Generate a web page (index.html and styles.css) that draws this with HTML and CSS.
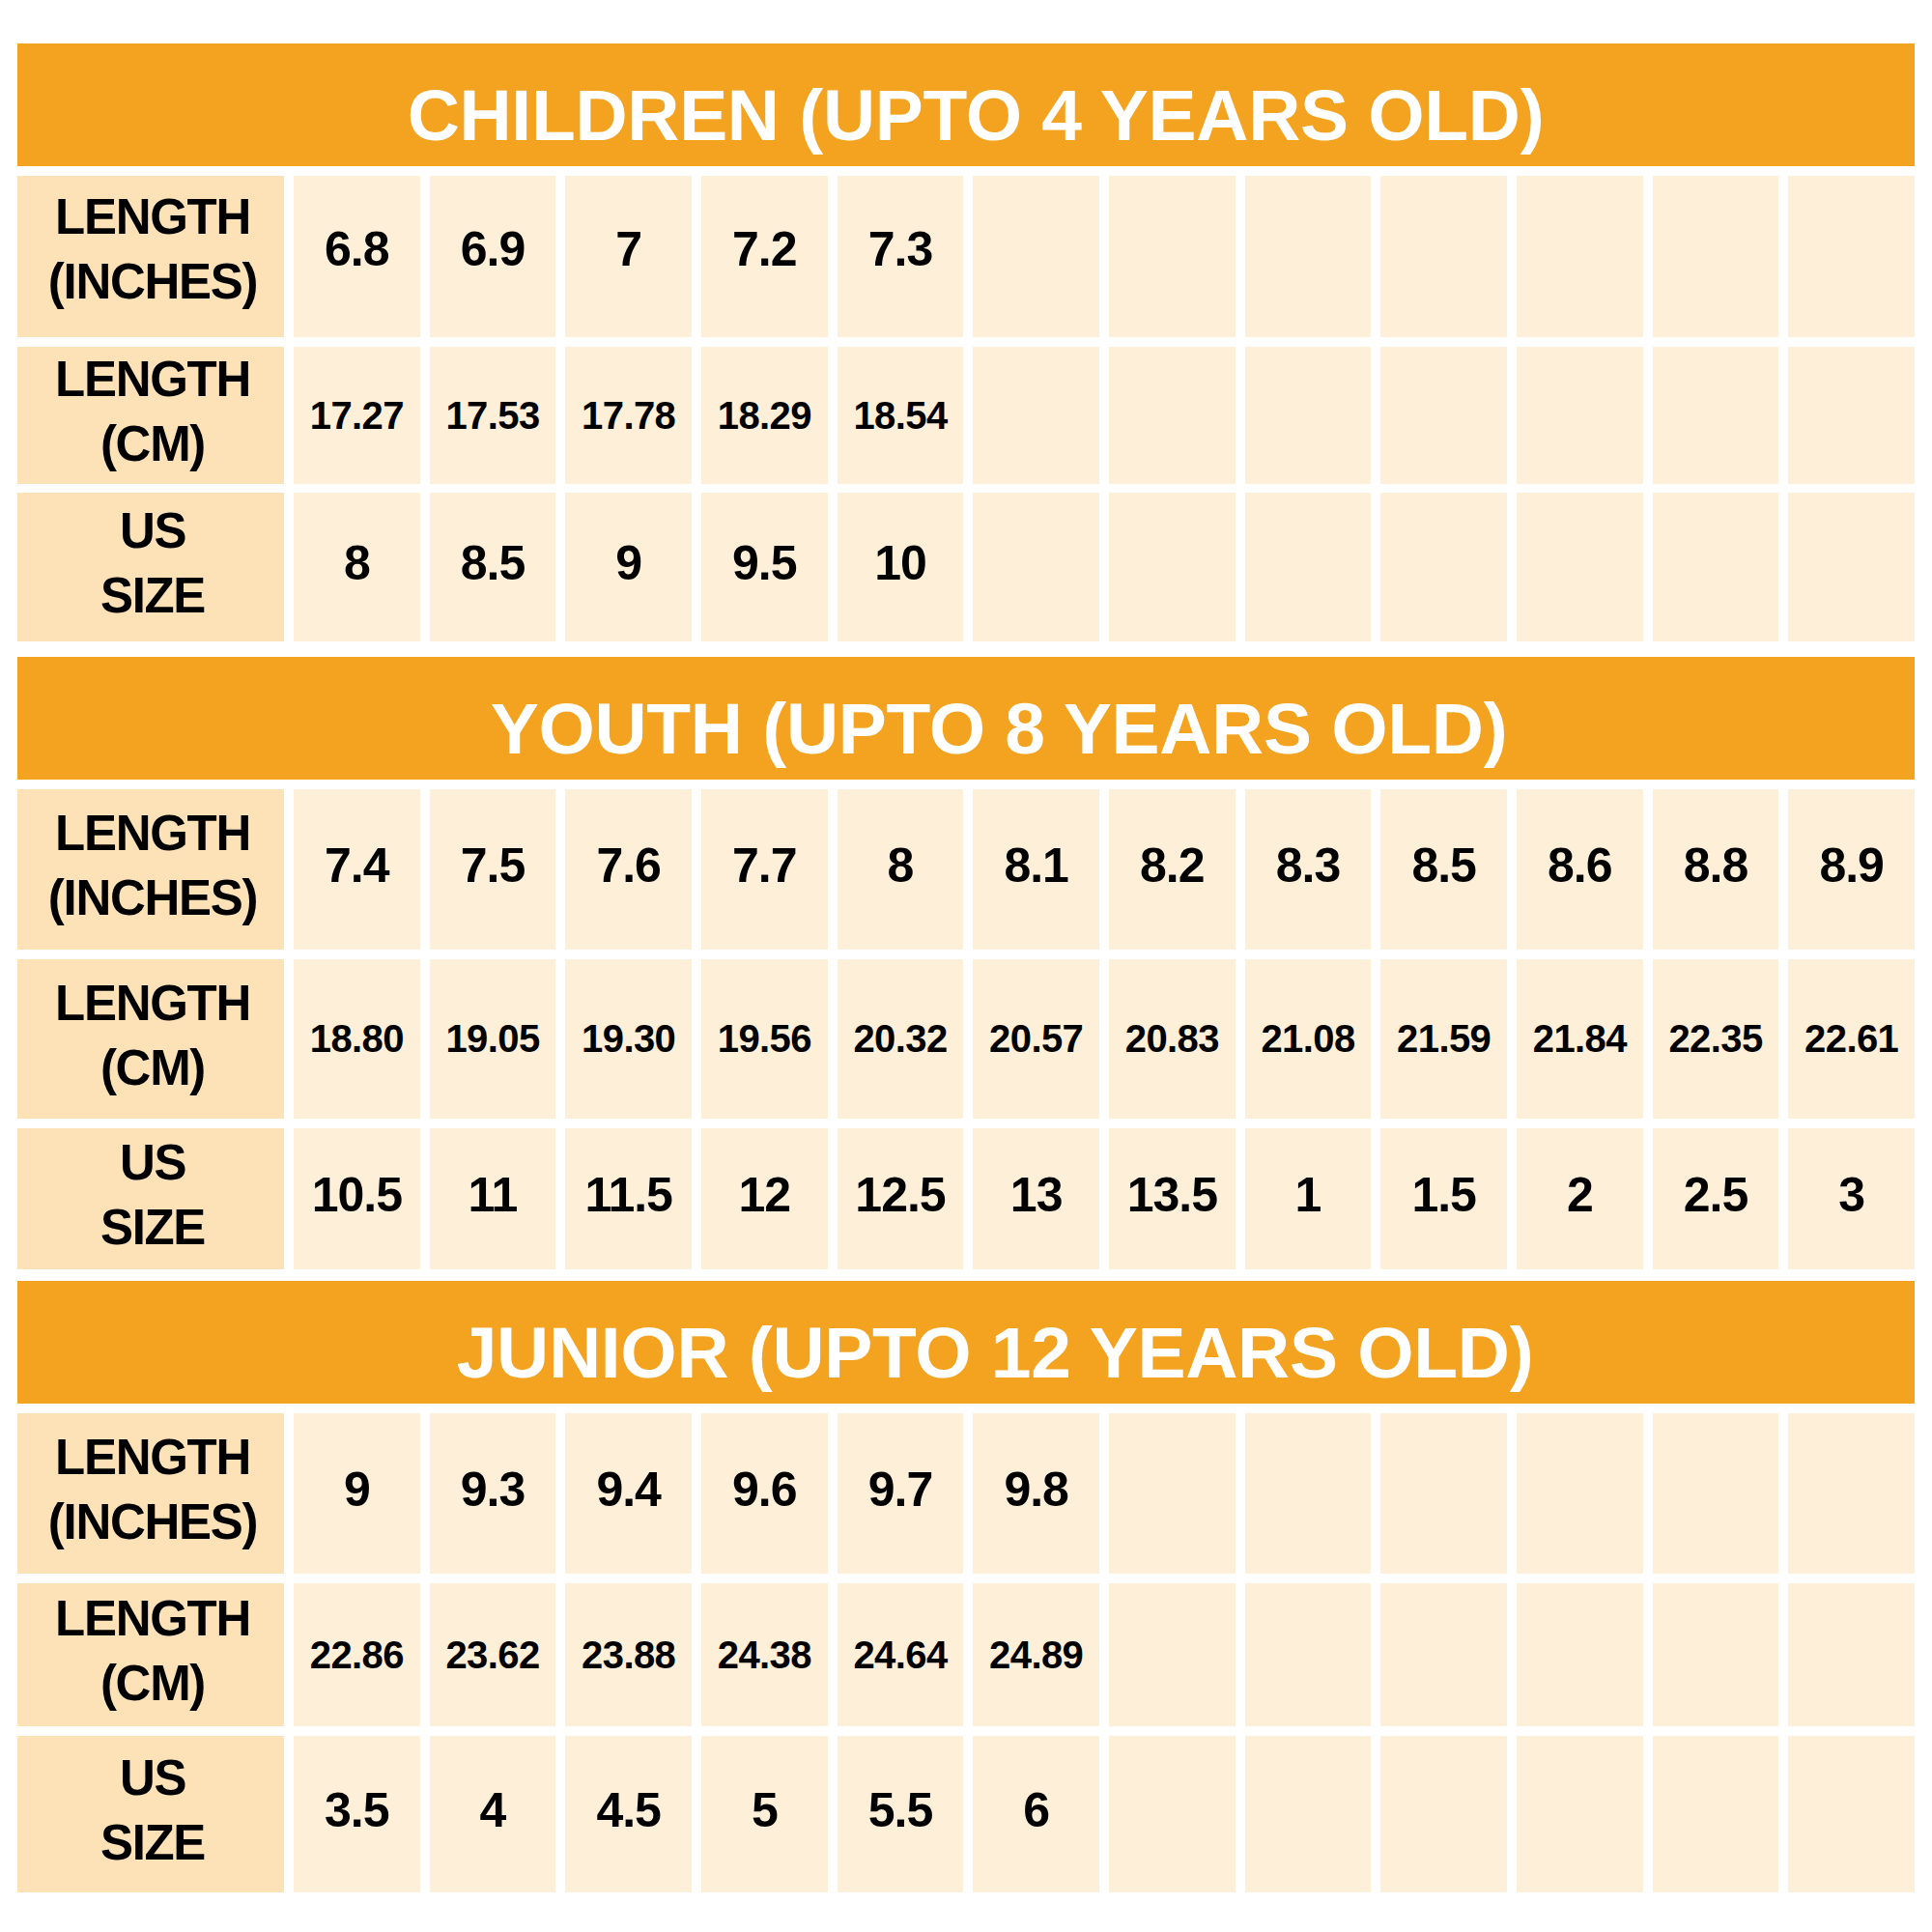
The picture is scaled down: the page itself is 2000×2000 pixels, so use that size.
FILE: index.html
```html
<!DOCTYPE html>
<html>
<head>
<meta charset="utf-8">
<link rel="stylesheet" href="styles.css">
</head>
<body>
<div class="chart">
  <section class="group">
    <div class="title t-children">CHILDREN (UPTO 4 YEARS OLD)</div>
    <div class="row h167 first">
      <div class="label">LENGTH<br>(INCHES)</div>
      <div class="cell">6.8</div><div class="cell">6.9</div><div class="cell">7</div><div class="cell">7.2</div><div class="cell">7.3</div>
      <div class="cell"></div><div class="cell"></div><div class="cell"></div><div class="cell"></div><div class="cell"></div><div class="cell"></div><div class="cell"></div>
    </div>
    <div class="row h141 cm">
      <div class="label">LENGTH<br>(CM)</div>
      <div class="cell">17.27</div><div class="cell">17.53</div><div class="cell">17.78</div><div class="cell">18.29</div><div class="cell">18.54</div>
      <div class="cell"></div><div class="cell"></div><div class="cell"></div><div class="cell"></div><div class="cell"></div><div class="cell"></div><div class="cell"></div>
    </div>
    <div class="row h154">
      <div class="label">US<br>SIZE</div>
      <div class="cell">8</div><div class="cell">8.5</div><div class="cell">9</div><div class="cell">9.5</div><div class="cell">10</div>
      <div class="cell"></div><div class="cell"></div><div class="cell"></div><div class="cell"></div><div class="cell"></div><div class="cell"></div><div class="cell"></div>
    </div>
  </section>

  <section class="group g-youth">
    <div class="title t-youth">YOUTH (UPTO 8 YEARS OLD)</div>
    <div class="row h166">
      <div class="label">LENGTH<br>(INCHES)</div>
      <div class="cell">7.4</div><div class="cell">7.5</div><div class="cell">7.6</div><div class="cell">7.7</div><div class="cell">8</div><div class="cell">8.1</div>
      <div class="cell">8.2</div><div class="cell">8.3</div><div class="cell">8.5</div><div class="cell">8.6</div><div class="cell">8.8</div><div class="cell">8.9</div>
    </div>
    <div class="row h165 cm">
      <div class="label">LENGTH<br>(CM)</div>
      <div class="cell">18.80</div><div class="cell">19.05</div><div class="cell">19.30</div><div class="cell">19.56</div><div class="cell">20.32</div><div class="cell">20.57</div>
      <div class="cell">20.83</div><div class="cell">21.08</div><div class="cell">21.59</div><div class="cell">21.84</div><div class="cell">22.35</div><div class="cell">22.61</div>
    </div>
    <div class="row h146">
      <div class="label">US<br>SIZE</div>
      <div class="cell">10.5</div><div class="cell">11</div><div class="cell">11.5</div><div class="cell">12</div><div class="cell">12.5</div><div class="cell">13</div>
      <div class="cell">13.5</div><div class="cell">1</div><div class="cell">1.5</div><div class="cell">2</div><div class="cell">2.5</div><div class="cell">3</div>
    </div>
  </section>

  <section class="group g-junior">
    <div class="title t-junior">JUNIOR (UPTO 12 YEARS OLD)</div>
    <div class="row h166">
      <div class="label">LENGTH<br>(INCHES)</div>
      <div class="cell">9</div><div class="cell">9.3</div><div class="cell">9.4</div><div class="cell">9.6</div><div class="cell">9.7</div><div class="cell">9.8</div>
      <div class="cell"></div><div class="cell"></div><div class="cell"></div><div class="cell"></div><div class="cell"></div><div class="cell"></div>
    </div>
    <div class="row h148 cm">
      <div class="label">LENGTH<br>(CM)</div>
      <div class="cell">22.86</div><div class="cell">23.62</div><div class="cell">23.88</div><div class="cell">24.38</div><div class="cell">24.64</div><div class="cell">24.89</div>
      <div class="cell"></div><div class="cell"></div><div class="cell"></div><div class="cell"></div><div class="cell"></div><div class="cell"></div>
    </div>
    <div class="row h162">
      <div class="label">US<br>SIZE</div>
      <div class="cell">3.5</div><div class="cell">4</div><div class="cell">4.5</div><div class="cell">5</div><div class="cell">5.5</div><div class="cell">6</div>
      <div class="cell"></div><div class="cell"></div><div class="cell"></div><div class="cell"></div><div class="cell"></div><div class="cell"></div>
    </div>
  </section>
</div>
</body>
</html>
```
FILE: styles.css
```css
html, body {
  margin: 0;
  padding: 0;
  background: #ffffff;
}

body {
  font-family: "Liberation Sans", Arial, sans-serif;
  font-weight: bold;
  color: #000000;
}

.chart {
  width: 1964px;
  padding: 45px 0 0 18px;
  display: flex;
  flex-direction: column;
}

.group {
  display: flex;
  flex-direction: column;
  gap: 10px;
}

.g-youth { margin-top: 16px; }
.g-junior { margin-top: 12px; }

.title {
  height: 127px;
  box-sizing: border-box;
  padding-top: 20px;
  background: #f3a31f;
  color: #ffffff;
  font-size: 75px;
  letter-spacing: -0.3px;
  display: flex;
  align-items: center;
  justify-content: center;
}

.t-children { padding-left: 20px; }
.t-youth { padding-left: 68px; }
.t-junior { padding-left: 60px; }

.row {
  display: grid;
  grid-template-columns: 276px repeat(12, 1fr);
  gap: 10px;
}

.h141 { height: 141px; }
.h146 { height: 146px; }
.h148 { height: 148px; }
.h154 { height: 154px; }
.h162 { height: 162px; }
.h165 { height: 165px; }
.h166 { height: 166px; }
.h167 { height: 167px; }

.label {
  background: #fde2b8;
  font-size: 51px;
  line-height: 67px;
  letter-spacing: -1.3px;
  text-align: center;
  display: flex;
  align-items: center;
  justify-content: center;
  padding-bottom: 8px;
  padding-left: 4px;
  box-sizing: border-box;
}

.first .label { padding-bottom: 16px; }

.cell {
  background: #feefd8;
  font-size: 50px;
  letter-spacing: -1px;
  display: flex;
  align-items: center;
  justify-content: center;
  padding-bottom: 8px;
  box-sizing: border-box;
}

.first .cell { padding-bottom: 16px; }

.cm .cell {
  font-size: 40px;
  letter-spacing: -0.6px;
  padding-bottom: 0;
}
```
